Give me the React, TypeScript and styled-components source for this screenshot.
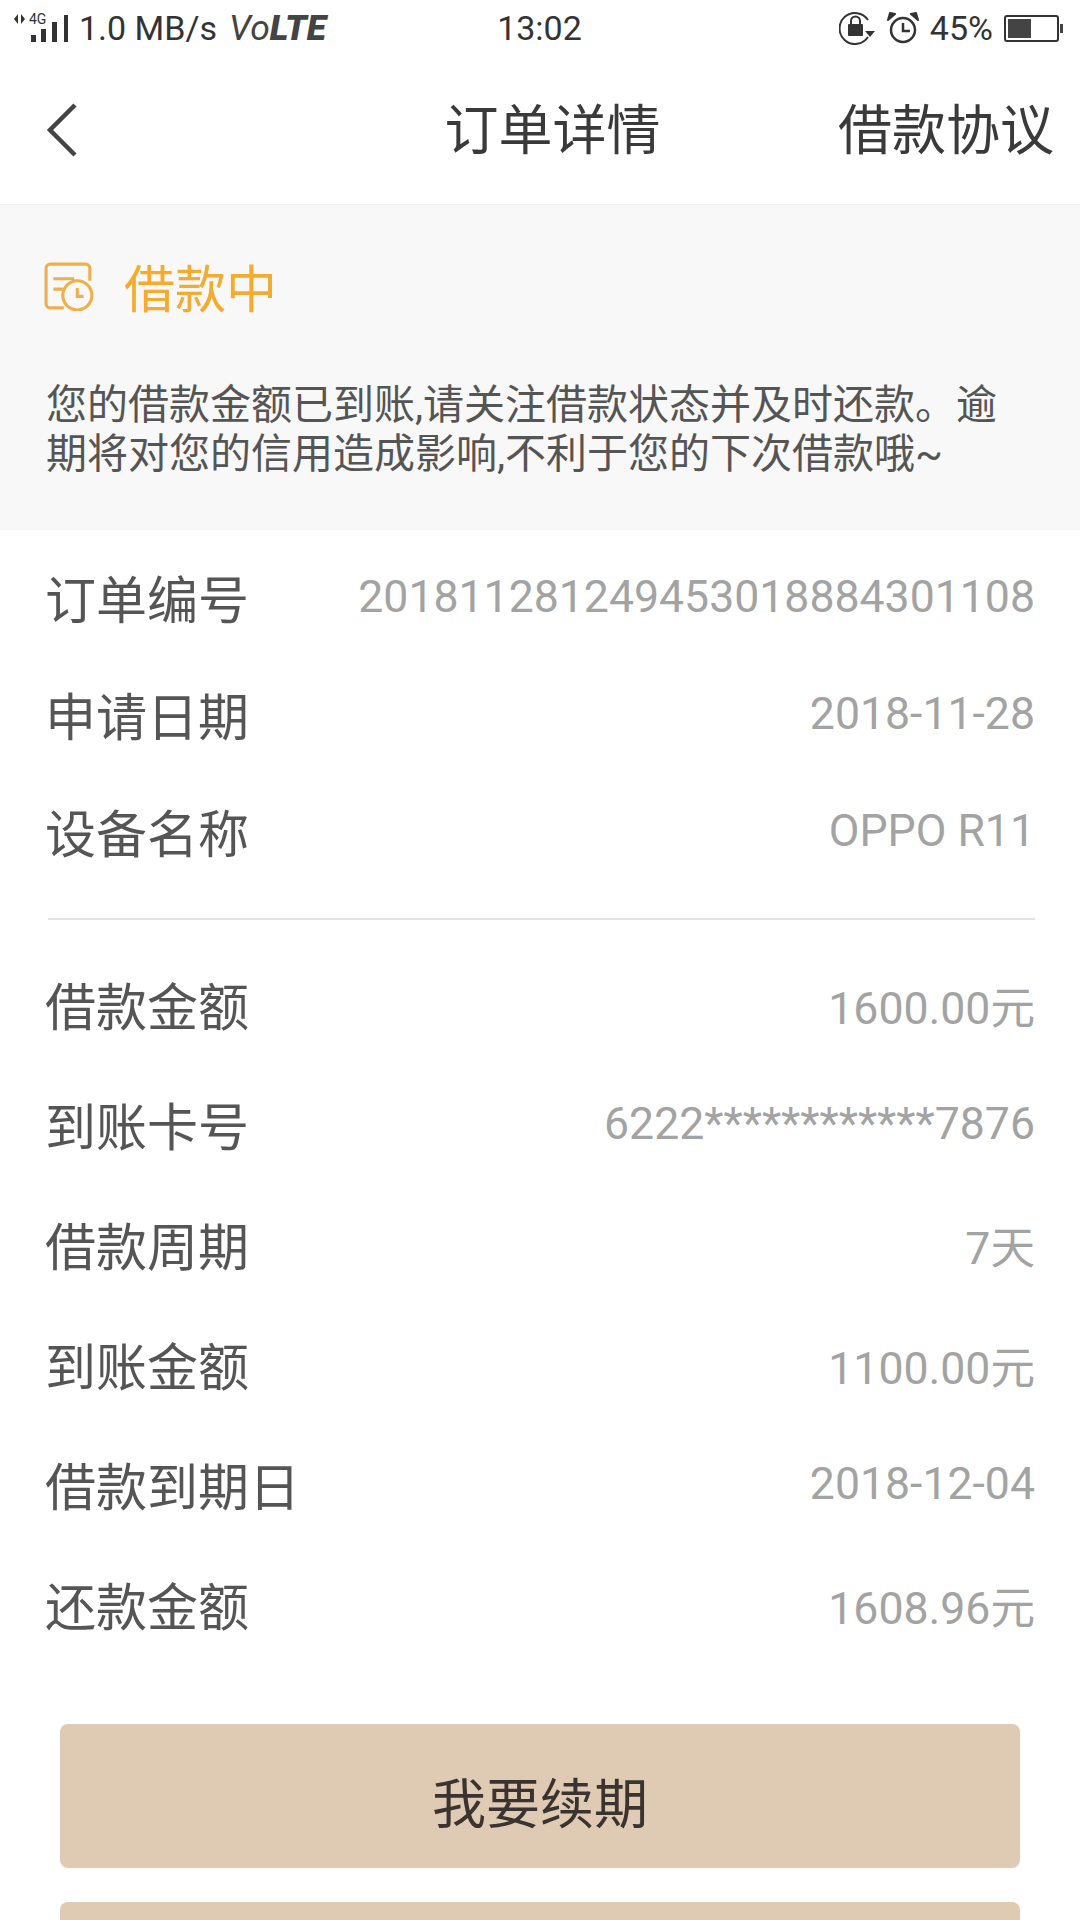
import React from "react";
import styled, { createGlobalStyle } from "styled-components";

const CJK = `Roboto, "Noto Sans CJK SC", sans-serif`;

const GlobalStyle = createGlobalStyle`
  html, body {
    margin: 0;
    padding: 0;
    background: #fff;
  }
  body {
    font-family: ${CJK};
  }
`;

const orderRows = [
  { label: "订单编号", value: "201811281249453018884301108" },
  { label: "申请日期", value: "2018-11-28" },
  { label: "设备名称", value: "OPPO R11" },
];

const loanRows = [
  { label: "借款金额", value: "1600.00元" },
  { label: "到账卡号", value: "6222************7876" },
  { label: "借款周期", value: "7天" },
  { label: "到账金额", value: "1100.00元" },
  { label: "借款到期日", value: "2018-12-04" },
  { label: "还款金额", value: "1608.96元" },
];

const SignalIcon = () => (
  <svg width="58" height="34" viewBox="0 0 58 34">
    <path d="M6 3v10L2 8zM9 3v10l4-5z" fill="#333" />
    <text x="17" y="13" fontSize="14" fontFamily="Roboto" fill="#333">4G</text>
    <rect x="19" y="24" width="5" height="7" fill="#333" />
    <rect x="29" y="18" width="5" height="13" fill="#333" />
    <rect x="40" y="11" width="5" height="20" fill="#333" />
    <rect x="52" y="4" width="4" height="27" fill="#333" />
  </svg>
);

const LockRotateIcon = () => (
  <svg width="37" height="34" viewBox="0 0 37 34" fill="none">
    <path d="M29 9A15.500 15.500 0 1 0 29 26" stroke="#333" strokeWidth="2" />
    <path d="M26 20h10l-5 6z" fill="#333" />
    <rect x="9" y="13" width="15" height="12" rx="1" fill="#333" />
    <path d="M12 13V10a4.500 4.500 0 0 1 9 0v3" stroke="#333" strokeWidth="2" />
  </svg>
);

const AlarmIcon = () => (
  <svg width="32" height="34" viewBox="0 0 32 34" fill="none">
    <circle cx="16" cy="19" r="12" stroke="#333" strokeWidth="2.500" />
    <path d="M16 12v8h7" stroke="#333" strokeWidth="2.500" />
    <path d="M1 9 8 3 3 2zM31 9 24 3 29 2z" fill="#333" stroke="#333" strokeWidth="2" strokeLinejoin="round" />
  </svg>
);

const BatteryIcon = () => (
  <svg width="60" height="28" viewBox="0 0 60 28" fill="none">
    <rect x="1" y="2" width="53" height="25" rx="2" stroke="#333" strokeWidth="2" />
    <rect x="4" y="5" width="23" height="19" fill="#444" />
    <rect x="56" y="10" width="3" height="9" fill="#444" />
  </svg>
);

const BackIcon = () => (
  <svg width="32" height="58" viewBox="0 0 32 58" fill="none">
    <path d="M29 3 4 28l25 25" stroke="#444" strokeWidth="4.500" />
  </svg>
);

const StatusIcon = () => (
  <svg width="50" height="50" viewBox="1 1 48 48" fill="none" stroke="#eeb04a" strokeWidth="3">
    <path d="M20 46H7a4 4 0 0 1-4-4V8a4 4 0 0 1 4-4h34a4 4 0 0 1 4 4v12" />
    <path d="M10 18h20M10 28h9" />
    <circle cx="33" cy="34" r="14" />
    <path d="M33 27v8h6" />
  </svg>
);

const App = () => (
  <Page>
    <GlobalStyle />
    <StatusBar>
      <StatusLeft>
        <SignalIcon />
        <Speed>1.0 MB/s</Speed>
        <VoLte>
          Vo<b>LTE</b>
        </VoLte>
      </StatusLeft>
      <Clock>13:02</Clock>
      <StatusRight>
        <LockRotateIcon />
        <AlarmIcon />
        <Battery>45%</Battery>
        <BatteryIcon />
      </StatusRight>
    </StatusBar>

    <NavBar>
      <BackButton>
        <BackIcon />
      </BackButton>
      <NavTitle>订单详情</NavTitle>
      <NavAction>借款协议</NavAction>
    </NavBar>

    <Notice>
      <NoticeHead>
        <StatusIcon />
        <NoticeTitle>借款中</NoticeTitle>
      </NoticeHead>
      <NoticeText>
        您的借款金额已到账,请关注借款状态并及时还款。逾期将对您的信用造成影响,不利于您的下次借款哦~
      </NoticeText>
    </Notice>

    <OrderSection>
      {orderRows.map((row) => (
        <Row key={row.label} $height={117}>
          <Label>{row.label}</Label>
          <Value>{row.value}</Value>
        </Row>
      ))}
    </OrderSection>
    <Divider />
    <LoanSection>
      {loanRows.map((row) => (
        <Row key={row.label} $height={120}>
          <Label>{row.label}</Label>
          <Value>{row.value}</Value>
        </Row>
      ))}
    </LoanSection>

    <Actions>
      <ActionButton>我要续期</ActionButton>
      <ActionButton />
    </Actions>
  </Page>
);

export default App;

const Page = styled.div`
  width: 1080px;
  height: 1920px;
  overflow: hidden;
  background: #fff;
  color: #333;
`;

const StatusBar = styled.div`
  display: flex;
  align-items: center;
  justify-content: space-between;
  height: 56px;
  padding: 0 16px 0 12px;
`;

const StatusLeft = styled.div`
  display: flex;
  align-items: center;
  gap: 9px;
  flex: 0 0 400px;
`;

const StatusRight = styled(StatusLeft)`
  justify-content: flex-end;
  gap: 11px;
`;

const Speed = styled.span`
  font-size: 34px;
  color: #333;
`;

const VoLte = styled.span`
  font-size: 35.500px;
  font-style: italic;
  margin-left: 3px;
  color: #444;

  b {
    font-weight: 900;
  }
`;

const Clock = styled.span`
  font-size: 34px;
  margin-left: 3px;
`;

const Battery = styled.span`
  font-size: 34px;
`;

const NavBar = styled.div`
  position: relative;
  display: flex;
  align-items: center;
  justify-content: center;
  height: 149px;
  box-sizing: border-box;
  padding-top: 4px;
  border-bottom: 1px solid #f0f0f0;
`;

const BackButton = styled.div`
  position: absolute;
  left: 46px;
  top: 46px;
  line-height: 0;
`;

const NavTitle = styled.div`
  font-size: 54px;
  line-height: 60px;
  color: #3a3a3a;
  margin-left: 25px;
`;

const NavAction = styled.div`
  position: absolute;
  right: 26px;
  top: 46px;
  font-size: 54px;
  line-height: 60px;
  color: #3a3a3a;
`;

const Notice = styled.div`
  height: 325px;
  box-sizing: border-box;
  padding: 51px 64px 0 44px;
  background: #f8f8f8;
`;

const NoticeHead = styled.div`
  display: flex;
  align-items: center;
  gap: 30px;
  height: 60px;
`;

const NoticeTitle = styled.div`
  font-size: 51px;
  color: #f5ab2e;
`;

const NoticeText = styled.div`
  margin-top: 65px;
  margin-left: 2px;
  font-size: 41px;
  line-height: 49px;
  color: #555;
`;

const OrderSection = styled.div`
  padding: 8px 45px 0 45px;
`;

const LoanSection = styled.div`
  padding: 24px 45px 0 45px;
`;

const Row = styled.div<{ $height: number }>`
  display: flex;
  align-items: center;
  justify-content: space-between;
  height: ${(p) => p.$height}px;
`;

const Label = styled.div`
  font-size: 51px;
  color: #555;
`;

const Value = styled.div`
  font-size: 44.600px;
  color: #a3a3a3;
`;

const Divider = styled.div`
  height: 2px;
  margin: 29px 45px 0 48px;
  background: #e4e4e4;
`;

const Actions = styled.div`
  display: flex;
  flex-direction: column;
  gap: 34px;
  margin-top: 60px;
  padding: 0 60px;
`;

const ActionButton = styled.div`
  display: flex;
  align-items: center;
  justify-content: center;
  flex: none;
  height: 144px;
  box-sizing: border-box;
  padding-top: 8px;
  border-radius: 8px;
  background: #dfcbb3;
  font-size: 54px;
  color: #3a3330;
`;
